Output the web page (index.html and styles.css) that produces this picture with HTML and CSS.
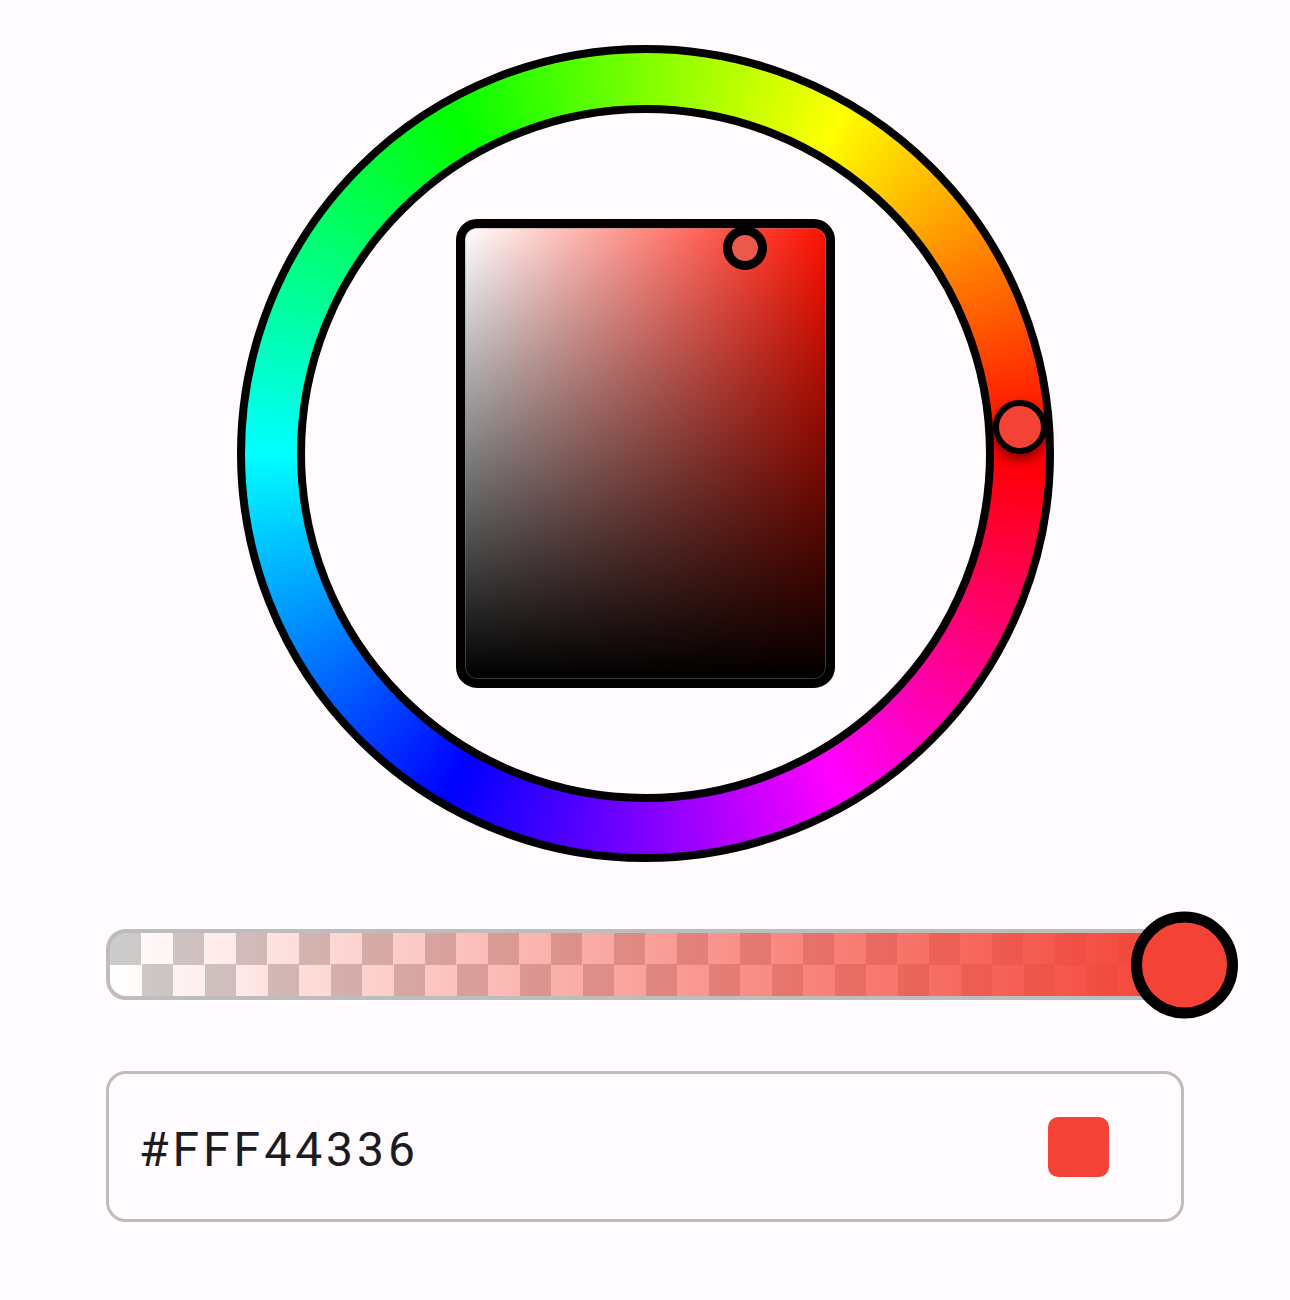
FILE: index.html
```html
<!DOCTYPE html>
<html lang="en">
<head>
<meta charset="utf-8">
<title>Color picker</title>
<link rel="stylesheet" href="styles.css">
</head>
<body>
<main class="picker">
  <div class="wheel">
    <div class="wheel-hole">
      <div class="sv">
        <span class="sv-thumb"></span>
      </div>
    </div>
    <span class="hue-thumb"></span>
  </div>

  <div class="alpha">
    <span class="alpha-thumb"></span>
  </div>

  <div class="hex-field">
    <span class="hex-text">#FFF44336</span>
    <span class="swatch"></span>
  </div>
</main>
</body>
</html>
```

FILE: styles.css
```css
html, body {
  margin: 0;
  padding: 0;
  background: #fffbfe;
}

.picker {
  display: flex;
  flex-direction: column;
  align-items: stretch;
  padding: 45px 106px 0;
  font-family: Roboto, "Liberation Sans", sans-serif;
}

.wheel {
  position: relative;
  align-self: center;
  width: 817px;
  height: 817px;
  box-sizing: border-box;
  border: 8px solid #000;
  border-radius: 50%;
  background: conic-gradient(from 90deg, #ff0000, #ff00ff, #0000ff, #00ffff, #00ff00, #ffff00, #ff0000);
  display: flex;
  align-items: center;
  justify-content: center;
}

.wheel-hole {
  width: 697px;
  height: 697px;
  box-sizing: border-box;
  border: 8px solid #000;
  border-radius: 50%;
  background: #fffbfe;
  display: flex;
  align-items: center;
  justify-content: center;
}

.sv {
  position: relative;
  width: 379px;
  height: 469px;
  box-sizing: border-box;
  border: 9px solid #000;
  border-radius: 21px;
  background:
    linear-gradient(to bottom, rgba(0,0,0,0), #000),
    linear-gradient(to right, #ffffff, #ff1100);
  box-shadow: inset 0 0 0 1px rgba(140,140,140,0.4);
}

.sv-thumb {
  position: absolute;
  left: 280px;
  top: 20px;
  width: 44px;
  height: 44px;
  box-sizing: border-box;
  border: 9px solid #000;
  border-radius: 50%;
  background: #ea5a4a;
  transform: translate(-50%, -50%);
}

.hue-thumb {
  position: absolute;
  left: 775px;
  top: 374px;
  width: 54px;
  height: 54px;
  box-sizing: border-box;
  border: 6px solid #000;
  border-radius: 50%;
  background: #f44336;
  transform: translate(-50%, -50%);
  box-shadow: 0 6px 12px rgba(0,0,0,0.45);
}

.alpha {
  position: relative;
  margin-top: 67px;
  height: 71px;
  box-sizing: border-box;
  border: 4px solid #bdbdbd;
  border-radius: 20px;
  background:
    linear-gradient(to right, rgba(244,67,54,0), #f44336),
    repeating-conic-gradient(#ffffff 0 25%, #cccccc 0 50%) 0 0 / 63px 63px;
}

.alpha-thumb {
  position: absolute;
  right: -58px;
  top: 50%;
  width: 107px;
  height: 107px;
  box-sizing: border-box;
  border: 11px solid #000;
  border-radius: 50%;
  background: #f44336;
  transform: translateY(-50%);
}

.hex-field {
  margin-top: 71px;
  height: 151px;
  box-sizing: border-box;
  border: 3px solid #bdbdbd;
  border-radius: 20px;
  display: flex;
  align-items: center;
  justify-content: space-between;
  padding: 6px 72px 0 30px;
}

.hex-text {
  font-size: 48px;
  letter-spacing: 4px;
  color: #1c1b1f;
  line-height: 1;
}

.swatch {
  width: 61px;
  height: 60px;
  border-radius: 10px;
  background: #f44336;
  margin-top: -6px;
}
```
